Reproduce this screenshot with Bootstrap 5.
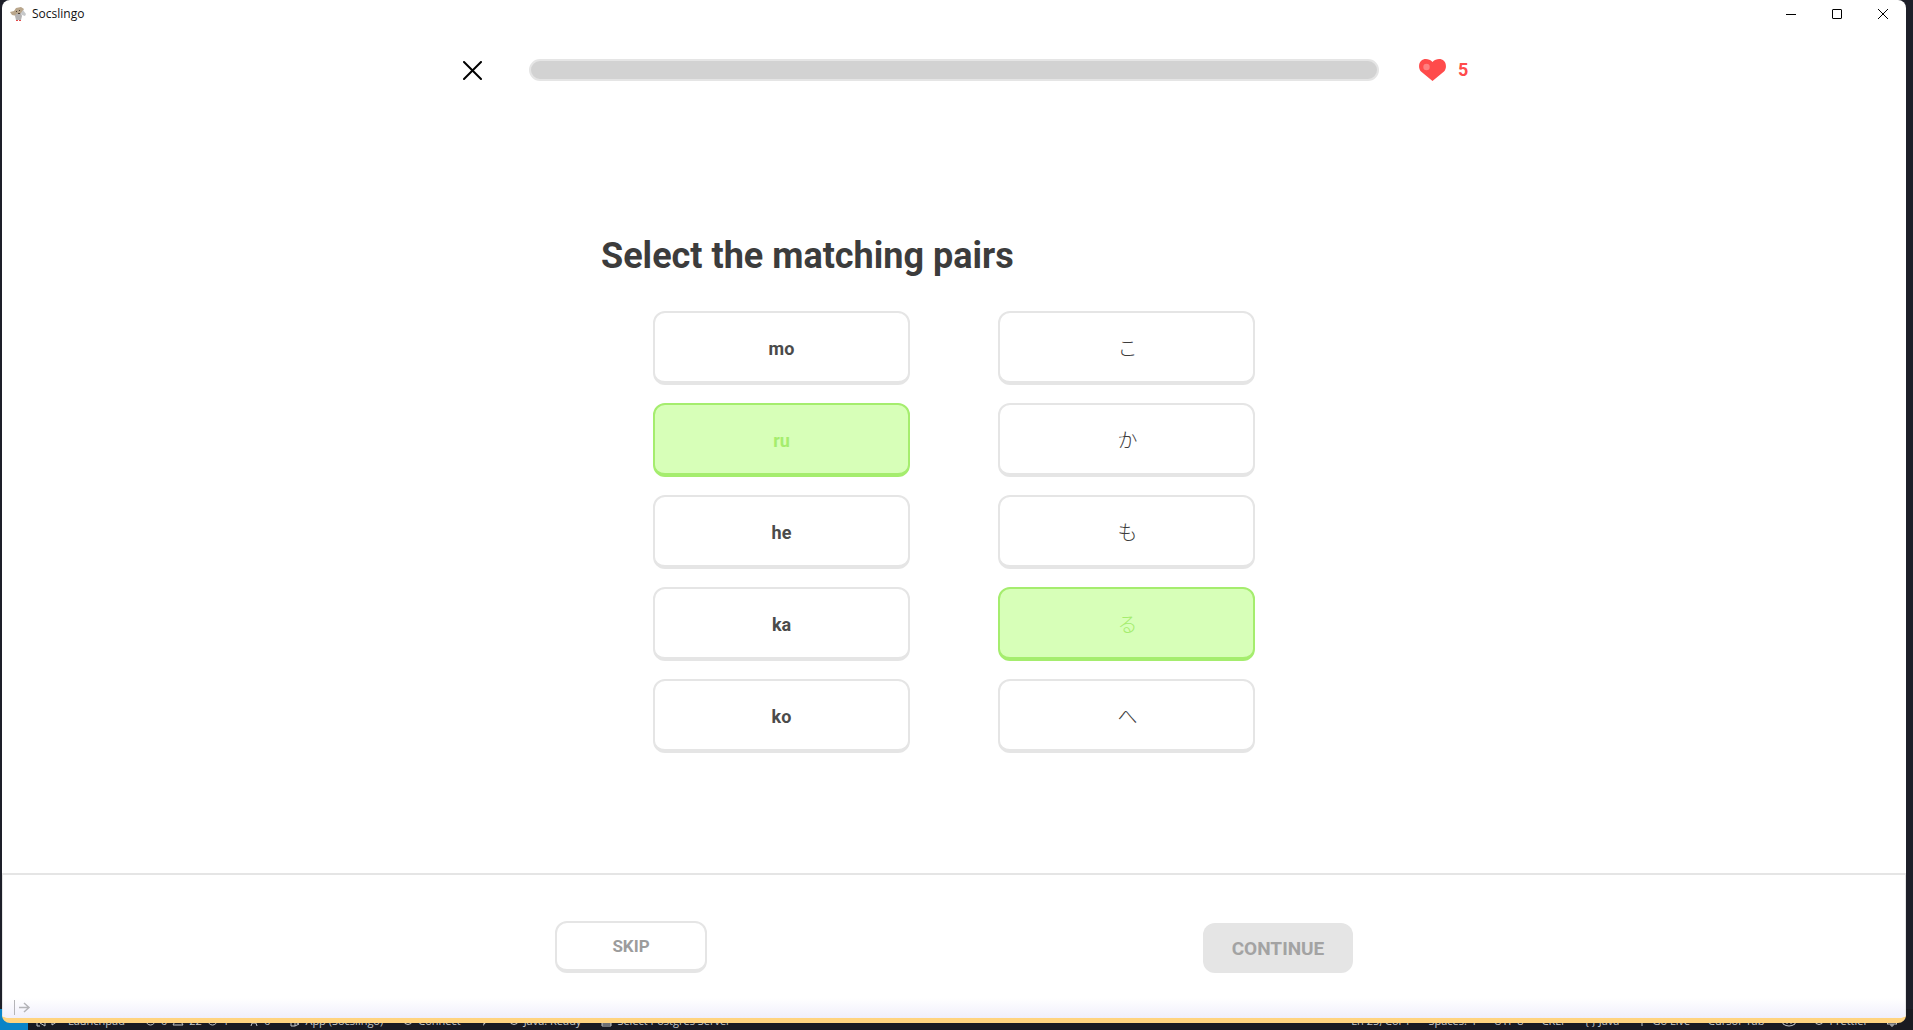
<!DOCTYPE html>
<html lang="en">
<head>
<meta charset="utf-8">
<meta name="viewport" content="width=device-width, initial-scale=1">
<title>Socslingo</title>
<link href="https://cdn.jsdelivr.net/npm/bootstrap@5.3.0/dist/css/bootstrap.min.css" rel="stylesheet">
<style>
  :root { --line: #e5e5e5; --ink: #3c3c3c; }
  body { font-family: Roboto, "Noto Sans CJK JP", sans-serif; color: var(--ink); background: #1d1f29; }
  svg { display: block; flex: none; }
  .ui-small { font-family: "Open Sans", "Noto Sans", sans-serif; font-size: 11px; line-height: 16px; }

  /* editor status bar behind the window */
  .status-strip { height: 21px; background: #191a21; color: #c4c6c8; white-space: nowrap; }
  .status-strip .remote { width: 28px; background: #0a84c8; }
  .status-strip .entry { display: flex; align-items: center; gap: 5px; padding-top: 2px; }
  .status-left { gap: 20px; }
  .status-left .remote { margin-right: -12px; }
  .status-right { gap: 18px; padding-right: 15px; }

  /* application window */
  .app-window { inset: 0 7px 7px 2px; background: #fff; border-radius: 8px; border-bottom: 5px solid #ffd480; overflow: hidden; }
  .title-strip { height: 28px; padding-left: 8px; gap: 6px; color: #111; }
  .title-strip .app-name { font-size: 12px; }
  .title-strip button { width: 46px; height: 28px; }
  .bare { border: 0; background: none; padding: 0; display: flex; align-items: center; justify-content: center; }

  .lesson-head { padding: 31px 16px 30px; }
  .head-side { flex: 1 1 0; }
  .quit-btn { margin-right: 47px; }
  .lives { gap: 12px; color: #ff4b4b; font-size: 18px; font-weight: 700; line-height: 22px; }
  .lives svg { margin-left: 40px; }
  .lesson-progress { flex: 0 1 850px; height: 22px; border: 2px solid var(--line); border-radius: 11px; background: #d2d2d2; }

  .exercise { width: 706px; max-width: 100%; }
  .exercise h1 { font-size: 36px; line-height: 50px; font-weight: 700; margin-bottom: 30px; }
  .pairs { gap: 18px 88px; display: grid; grid-template-columns: repeat(2, 257px); grid-auto-rows: 74px; justify-content: center; }
  .tile { background: #fff; border: 2px solid var(--line); border-bottom-width: 4px; border-radius: 12px; color: #4b4b4b; font-size: 18px; font-weight: 700; padding: 2px 0 0; }
  .tile.kana { font-family: "Noto Sans CJK JP", sans-serif; font-size: 20px; font-weight: 300; line-height: 24px; color: var(--ink); padding: 1px 0 0 2px; }
  .tile.matched { background: #d7ffb8; border-color: #a5ed6e; color: #a5ed6e; }

  .lesson-foot { border: 2px solid var(--line); border-width: 2px 1px 0; padding-top: 46px; }
  .foot-actions { width: 798px; max-width: 100%; }
  .skip-btn { width: 152px; height: 52px; font-size: 17px; color: #9c9c9c; }
  .continue-btn { width: 150px; height: 50px; border: 0; border-radius: 12px; background: var(--line); color: #a3a3a3; font-size: 19px; font-weight: 700; padding: 2px 0 0; }
  .glow { height: 45px; padding: 0 0 3px 10px; background: linear-gradient(to top, #f0effc, #fff 20px); }
</style>
</head>
<body>
<div class="vh-100 position-relative overflow-hidden d-flex flex-column justify-content-end">

  <footer class="status-strip ui-small d-flex justify-content-between">
    <div class="status-left d-flex">
      <span class="remote"></span>
      <span class="entry">
        <svg width="10" height="12" viewBox="0 0 10 12" fill="none" stroke="currentColor"><path d="M1 1v10h3M9 11V5L4 8l5 3"/></svg>
        <svg width="8" height="12" viewBox="0 0 8 12" fill="none" stroke="currentColor"><path d="M1 10V2l6 4-6 4z"/></svg>
        <span class="ms-1">Launchpad</span></span>
      <span class="entry">
        <svg width="11" height="11" viewBox="0 0 11 11" fill="none" stroke="currentColor"><circle cx="5.500" cy="5.500" r="4.500"/><path d="M4 4l3 3M7 4l-3 3"/></svg>0
        <svg width="12" height="11" viewBox="0 0 12 11" fill="none" stroke="currentColor"><path d="M6 1l5 9H1zM6 4v3"/></svg>22
        <svg width="11" height="11" viewBox="0 0 11 11" fill="none" stroke="currentColor"><circle cx="5.500" cy="5.500" r="4.500"/><path d="M5.500 5v3"/></svg>1</span>
      <span class="entry"><svg width="10" height="11" viewBox="0 0 10 11" fill="none" stroke="currentColor"><path d="M5 3L2 11M5 3l3 8M3 8h4M2 1Q0 3 2 5M8 1q2 2 0 4"/></svg>0</span>
      <span class="entry"><svg width="10" height="12" viewBox="0 0 10 12" fill="none" stroke="currentColor"><path d="M4 1H1v10h4V7l4 2-4 2M7 1v5"/></svg>App (Socslingo)</span>
      <span class="entry"><svg width="10" height="11" viewBox="0 0 10 11" fill="none" stroke="currentColor"><circle cx="5" cy="5.500" r="4"/></svg>Connect</span>
      <span class="entry"><svg width="8" height="11" viewBox="0 0 8 11" fill="currentColor"><path d="M5 0L0 6h3l-1 5 6-7H4z"/></svg></span>
      <span class="entry"><svg width="10" height="11" viewBox="0 0 10 11" fill="none" stroke="currentColor"><circle cx="5" cy="5.500" r="4"/><path d="M3 6q2 3 4 0"/></svg>Java: Ready</span>
      <span class="entry"><svg width="11" height="12" viewBox="0 0 11 12" fill="none" stroke="currentColor"><path d="M1 1h9v10H1zM1 6h9M1 9h9"/></svg>Select Postgres Server</span>
    </div>
    <div class="status-right d-flex">
      <span class="entry">Ln 25, Col 1</span>
      <span class="entry">Spaces: 4</span>
      <span class="entry">UTF-8</span>
      <span class="entry">CRLF</span>
      <span class="entry">{ } Java</span>
      <span class="entry"><svg width="10" height="11" viewBox="0 0 10 11" fill="none" stroke="currentColor"><circle cx="5" cy="4" r="2"/><path d="M5 5v6M1 1q-1 3 1 5M9 1q1 3-1 5"/></svg>Go Live</span>
      <span class="entry">Cursor Tab</span>
      <span class="entry"><svg width="14" height="12" viewBox="0 0 14 12" fill="none" stroke="currentColor"><path d="M3 5V2q4-2 8 0v3l2 2v2q-6 4-12 0V7zM5 7v2M9 7v2M3 5h8"/></svg></span>
      <span class="entry"><svg width="10" height="11" viewBox="0 0 10 11" fill="none" stroke="currentColor"><circle cx="5" cy="5.500" r="4"/><path d="M2 3l6 5"/></svg>Prettier</span>
      <span class="entry"><svg width="12" height="12" viewBox="0 0 12 12" fill="none" stroke="currentColor"><path d="M1 9h10L9 7V4a3 3 0 0 0-6 0v3zM5 9v2h2V9"/></svg></span>
    </div>
  </footer>

  <div class="app-window position-absolute d-flex flex-column">
    <header class="title-strip ui-small d-flex align-items-center">
      <svg width="16" height="15" viewBox="0 0 16 15">
        <path d="M0 5l4-1 2-3 5-1 3 2-3 5-4 2-5-1z" fill="#b9a68c"/>
        <path d="M6 7l5-1 1 3-1 4H6L5 9z" fill="#b5b3b3"/>
        <path d="M11 6l2-3 3 4-1 2-3-1z" fill="#c6c8ca"/>
        <path d="M6 4h1v1H6zM9 3h1v1H9zM8 6h2v1H8z" fill="#4c4036"/>
        <path d="M6 13h2v1H6zM9 13h2v1H9z" fill="#e04a4a"/>
      </svg>
      <span class="app-name me-auto">Socslingo</span>
      <div class="d-flex">
        <button class="bare" type="button" aria-label="Minimize"><svg width="10" height="10" viewBox="0 0 10 10" stroke="#000"><path d="M0 5.500h10"/></svg></button>
        <button class="bare" type="button" aria-label="Maximize"><svg width="10" height="10" viewBox="0 0 10 10" fill="none" stroke="#000"><rect x=".5" y=".5" width="9" height="9" rx=".5"/></svg></button>
        <button class="bare" type="button" aria-label="Close window"><svg width="10" height="10" viewBox="0 0 10 10" stroke="#000"><path d="M0 0l10 10M10 0L0 10"/></svg></button>
      </div>
    </header>

    <div class="lesson-head d-flex align-items-center">
      <div class="head-side d-flex justify-content-end">
        <button class="bare quit-btn" type="button" aria-label="Quit lesson"><svg width="19" height="19" viewBox="0 0 19 19" stroke="#000" stroke-width="2" stroke-linecap="round"><path d="M1 1l17 17M18 1L1 18"/></svg></button>
      </div>
      <div class="lesson-progress" role="progressbar" aria-label="Lesson progress" aria-valuenow="0" aria-valuemin="0" aria-valuemax="100"></div>
      <div class="head-side lives d-flex align-items-center">
        <svg width="27" height="22" viewBox="0 0 27 22"><path d="M13.500 22L2 12.500C-.700 9.500-.500 4.500 2 2 5-.800 10-.500 13.500 3 17-.500 22-.800 25 2c2.500 2.500 2.700 7.500 0 10.500z" fill="#ff4b4b"/><circle cx="7.500" cy="8" r="3.200" fill="#ff8080"/></svg>
        <span>5</span>
      </div>
    </div>

    <main class="flex-grow-1 d-flex align-items-center justify-content-center">
      <div class="exercise">
        <h1>Select the matching pairs</h1>
        <div class="pairs">
          <button class="tile" type="button">mo</button>
          <button class="tile kana" type="button" lang="ja">こ</button>
          <button class="tile matched" type="button">ru</button>
          <button class="tile kana" type="button" lang="ja">か</button>
          <button class="tile" type="button">he</button>
          <button class="tile kana" type="button" lang="ja">も</button>
          <button class="tile" type="button">ka</button>
          <button class="tile kana matched" type="button" lang="ja">る</button>
          <button class="tile" type="button">ko</button>
          <button class="tile kana" type="button" lang="ja">へ</button>
        </div>
      </div>
    </main>

    <div class="lesson-foot">
      <div class="foot-actions mx-auto d-flex justify-content-between align-items-end">
        <button class="tile skip-btn" type="button">SKIP</button>
        <button class="continue-btn" type="button" disabled>CONTINUE</button>
      </div>
      <div class="glow d-flex align-items-end">
        <svg width="18" height="15" viewBox="0 0 18 15" fill="none" stroke="#b4b4b8"><path d="M1.500 0v15"/><path d="M6 7.500h9M11 3l5 4.500-5 4.500" stroke-width="1.500"/></svg>
      </div>
    </div>
  </div>
</div>
<script src="https://cdn.jsdelivr.net/npm/bootstrap@5.3.0/dist/js/bootstrap.bundle.min.js"></script>
</body>
</html>
